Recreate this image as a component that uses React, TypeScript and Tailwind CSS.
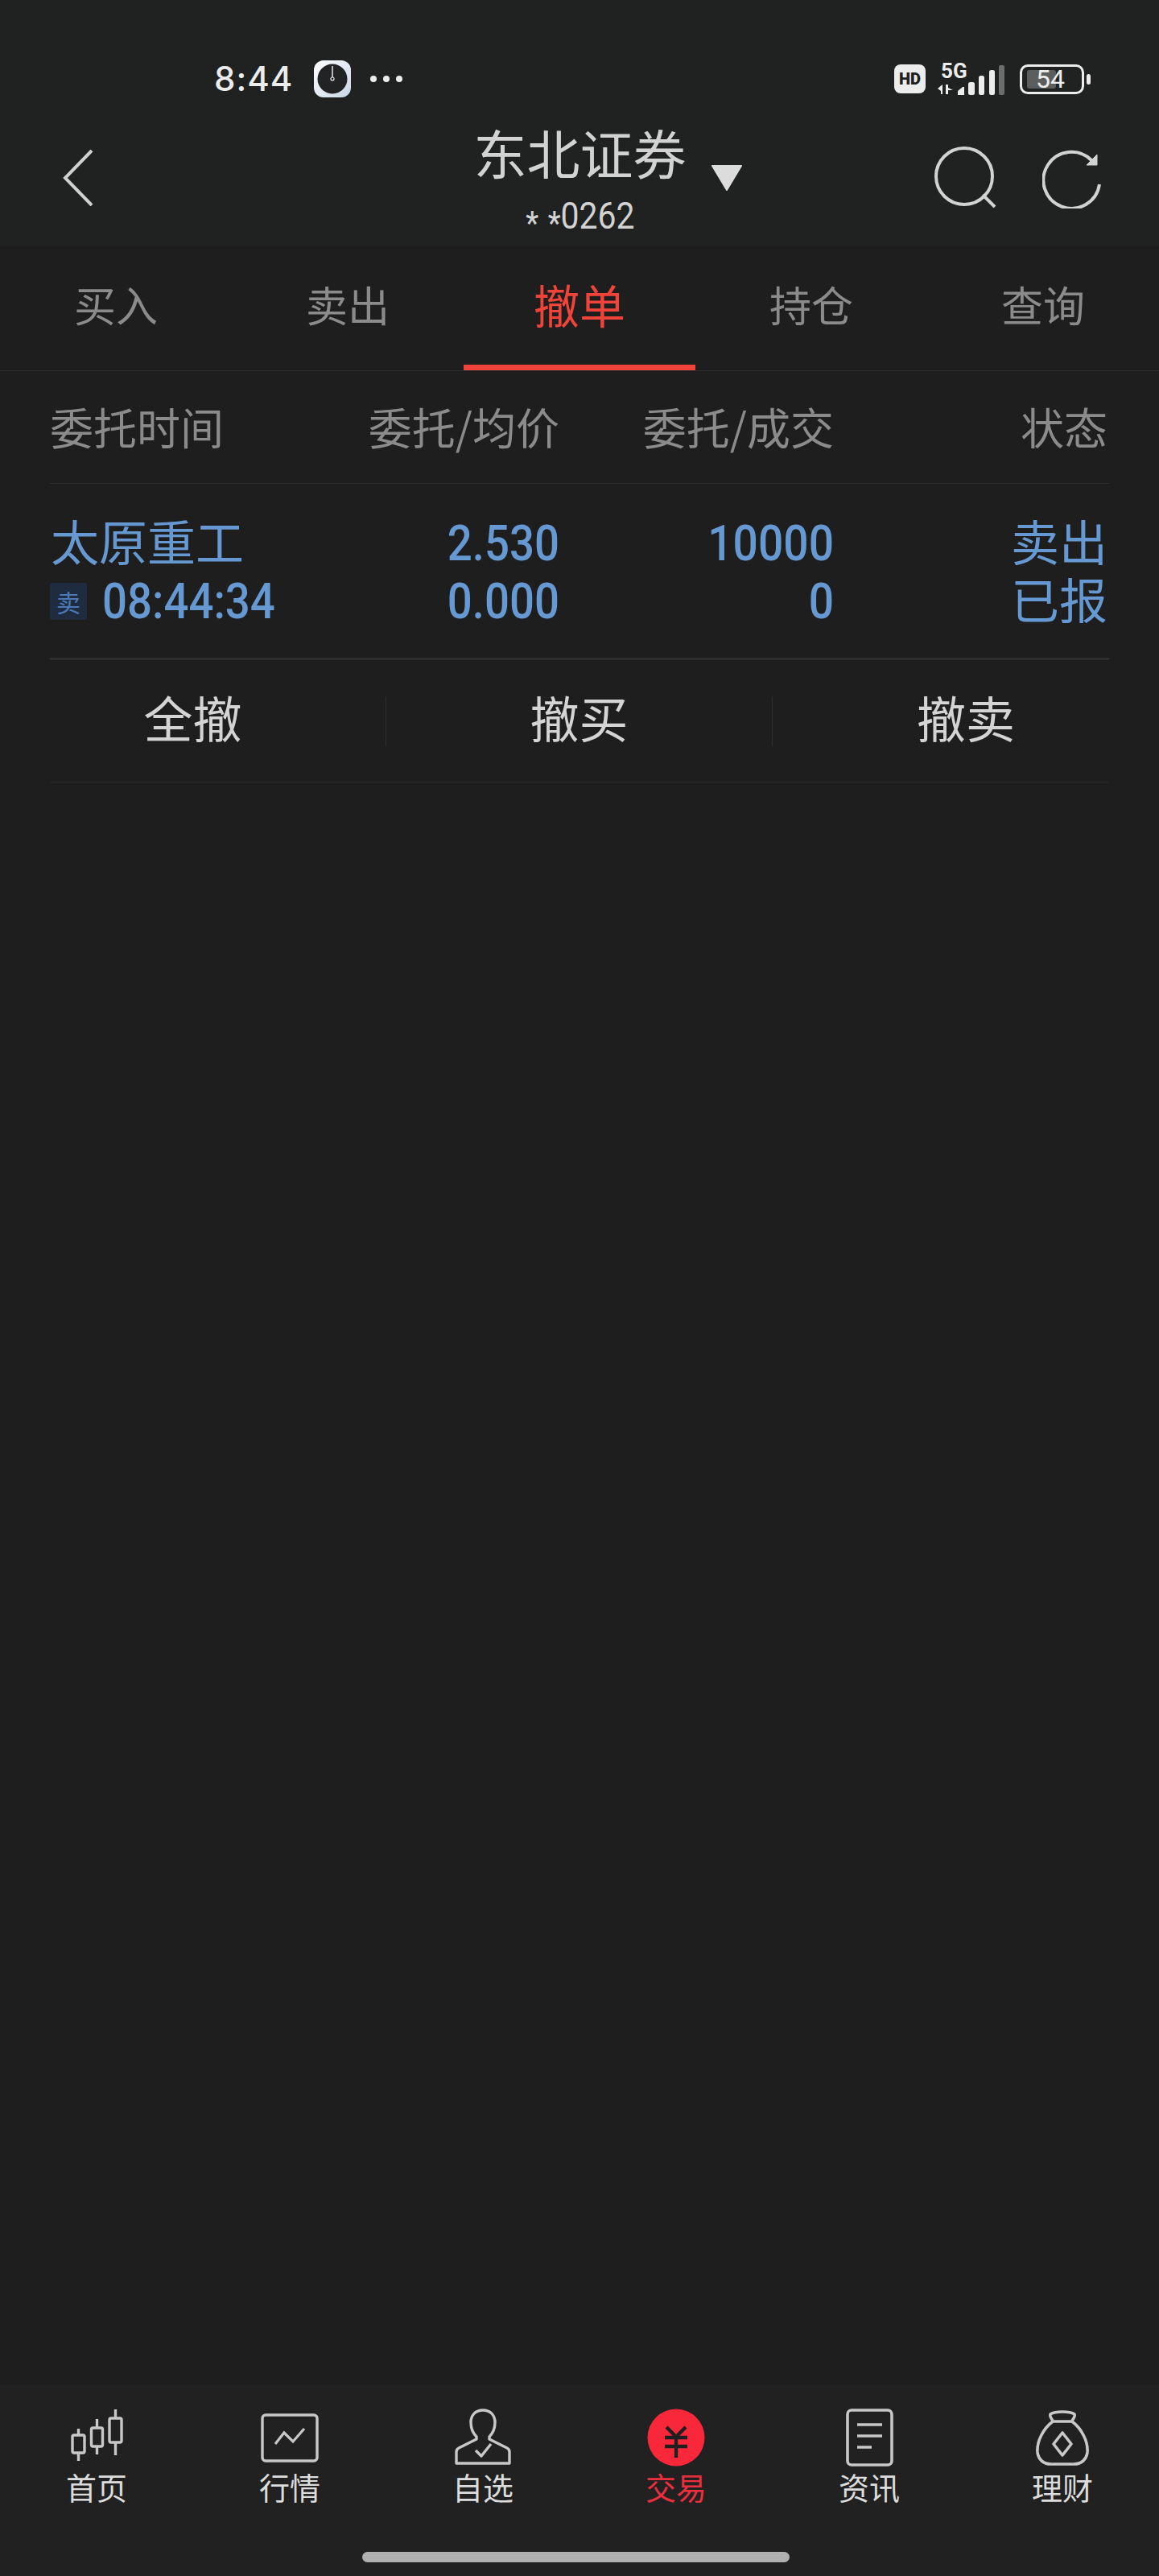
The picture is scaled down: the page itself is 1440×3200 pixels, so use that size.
const cjk = "font-['Noto_Sans_CJK_SC','Noto_Sans',sans-serif]";
const din = "font-['Roboto','Noto_Sans_CJK_SC',sans-serif]";

const tabs = ["买入", "卖出", "撤单", "持仓", "查询"];

function ClockIcon() {
  return (
    <svg width="46" height="46" viewBox="0 0 46 46">
      <defs>
        <linearGradient id="clockBg" x1="0" y1="0" x2="1" y2="1">
          <stop offset="0" stopColor="#ffffff" />
          <stop offset="1" stopColor="#c9d6e6" />
        </linearGradient>
      </defs>
      <rect width="46" height="46" rx="12" fill="url(#clockBg)" />
      <circle cx="23" cy="23" r="18.5" fill="#222325" />
      <line x1="23" y1="7" x2="23" y2="21" stroke="#e8e8e8" strokeWidth="1.5" />
      <circle cx="23" cy="23" r="2" fill="#222325" stroke="#eeeeee" strokeWidth="1.2" />
    </svg>
  );
}

function SignalBars() {
  return (
    <svg width="58" height="37" viewBox="0 0 58 37">
      <path d="M0 37v-5l6-5h2v10z" fill="#ececec" />
      <rect x="13" y="21" width="8" height="16" rx="2.5" fill="#ececec" />
      <rect x="26" y="13" width="7" height="24" rx="2.5" fill="#ececec" />
      <rect x="39" y="6" width="7" height="31" rx="2.5" fill="#ececec" />
      <rect x="51" y="0" width="7" height="37" rx="2" fill="#6b6d6d" />
    </svg>
  );
}

function Arrows() {
  return (
    <svg width="20" height="14" viewBox="0 0 20 14">
      <path d="M0 6l6-5v12H4V9z" fill="#ececec" />
      <path d="M10 1h3v4l6 3h-6v5h-3z" fill="#ececec" />
    </svg>
  );
}

function NavIcon({ name }: { name: string }) {
  const c = "#c8c8c8";
  if (name === "首页") {
    return (
      <svg width="72" height="72" viewBox="0 0 72 72" fill="none" stroke={c} strokeWidth="3.4">
        <rect x="6" y="33" width="15" height="22" rx="2" />
        <line x1="13.5" y1="25" x2="13.5" y2="33" />
        <line x1="13.5" y1="55" x2="13.5" y2="65" />
        <rect x="29.5" y="24" width="14" height="23" rx="2" />
        <line x1="36.5" y1="13" x2="36.5" y2="24" />
        <line x1="36.5" y1="47" x2="36.5" y2="57" />
        <rect x="52" y="12" width="15" height="30" rx="2" />
        <line x1="59.5" y1="1" x2="59.5" y2="12" />
        <line x1="59.5" y1="42" x2="59.5" y2="58" />
      </svg>
    );
  }
  if (name === "行情") {
    return (
      <svg width="72" height="72" viewBox="0 0 72 72" fill="none" stroke={c} strokeWidth="3.4">
        <rect x="2" y="8" width="68" height="57" rx="4" />
        <path d="M18 44l11-14 11 11 14-16" strokeWidth="3.2" />
      </svg>
    );
  }
  if (name === "自选") {
    return (
      <svg width="72" height="72" viewBox="0 0 72 72" fill="none" stroke={c} strokeWidth="3.4" strokeLinejoin="round">
        <path d="M28 35c-5-5-7-11-7-18 0-9 6-15 15-15s15 6 15 15c0 7-2 13-7 18v3l22 11c2 1 3 3 3 5v14H3V54c0-2 1-4 3-5l22-11z" />
        <path d="M27 52l7 7 12-15" strokeWidth="3.4" />
      </svg>
    );
  }
  if (name === "交易") {
    return (
      <svg width="72" height="72" viewBox="0 0 72 72">
        <circle cx="36" cy="36" r="35.5" fill="#f9273a" />
        <path d="M24 23l12 12 12-12M22 36h28M22 47h28M36 35v26" fill="none" stroke="#1f1f1f" strokeWidth="4.4" />
      </svg>
    );
  }
  if (name === "资讯") {
    return (
      <svg width="72" height="72" viewBox="0 0 72 72" fill="none" stroke={c} strokeWidth="3.6">
        <rect x="9" y="2" width="55" height="68" rx="5" />
        <path d="M21 20h31M21 34h31M21 48h18" />
      </svg>
    );
  }
  return (
    <svg width="72" height="72" viewBox="0 0 72 72" fill="none" stroke={c} strokeWidth="3.6" strokeLinejoin="round">
      <path d="M24 15c-3-4-4-6-3-8 6-4 24-4 30 0 1 2 0 4-3 8" />
      <path d="M24 16h24c12 9 20 25 19 38-1 10-8 15-17 15H22c-9 0-16-5-17-15-1-13 7-29 19-38z" />
      <path d="M36 30l11 14-11 14-11-14z" />
    </svg>
  );
}

export default function App() {
  return (
    <div className={`flex h-[3200px] w-[1440px] flex-col bg-[#1e1e1e] ${cjk}`}>
      {/* status bar + title */}
      <div className="h-[305px] bg-[#202221]">
        <div className="flex h-[124px] items-end pl-[266px] pr-[85px]">
          <div className="flex h-[52px] w-full items-center">
            <span className="font-['Inter',sans-serif] text-[42px] leading-none font-medium tracking-[1px] text-[#ececec]">8:44</span>
            <div className="ml-[26px]">
              <ClockIcon />
            </div>
            <div className="ml-[24px] flex gap-[8px]">
              <span className="size-[8px] rounded-full bg-[#ececec]" />
              <span className="size-[8px] rounded-full bg-[#ececec]" />
              <span className="size-[8px] rounded-full bg-[#ececec]" />
            </div>
            <div className="ml-auto flex items-center">
              <div className={`flex h-[36px] w-[39px] items-center justify-center rounded-[8px] bg-[#ececec] text-[20px] font-black text-[#1f2121] ${din}`}>
                HD
              </div>
              <div className="ml-[19px] flex w-[21px] flex-col overflow-visible">
                <span className={`text-[26px] leading-[20px] font-bold whitespace-nowrap text-[#ececec] ${din}`}>5G</span>
                <div className="mt-[6px] ml-[-4px]">
                  <Arrows />
                </div>
              </div>
              <div className="mt-[2px]">
                <SignalBars />
              </div>
              <div className="relative ml-[19px] flex h-[37px] w-[80px] items-center justify-center rounded-[10px] border-[3px] border-[#ececec] pr-[4px]">
                <div className="absolute top-[4px] bottom-[4px] left-[6px] w-[36px] rounded-[3px] bg-[#5c5e5e]" />
                <span className={`relative text-[32px] leading-none text-[#ececec] ${din}`}>54</span>
              </div>
              <div className="ml-[3px] h-[13px] w-[5px] rounded-full bg-[#ececec]" />
            </div>
          </div>
        </div>
        <div className="mt-[20px] flex items-start">
          <div className="ml-[78px] mt-[42px] w-[38px]">
            <svg width="38" height="70" viewBox="0 0 38 70" fill="none" stroke="#d0d0d0" strokeWidth="4">
              <path d="M36 1L3 35l33 34" />
            </svg>
          </div>
          <div className="ml-[474px] flex w-[261px] flex-col items-center">
            <span className="text-[66px] leading-[88px] whitespace-nowrap text-[#d2d2d2]">东北证券</span>
            <span className={`mt-[8px] origin-center scale-x-[0.89] text-[46px] leading-[56px] whitespace-nowrap text-[#d2d2d2] ${din}`}>
              <span className="align-[-7px] text-[40px] font-medium">
                <span className="tracking-[13px]">*</span>*
              </span>
              0262
            </span>
          </div>
          <svg className="mt-[61px] ml-[32px]" width="40" height="32" viewBox="0 0 40 32">
            <path d="M2 1h36L20 31z" fill="#dcdcdc" stroke="#dcdcdc" strokeWidth="2" strokeLinejoin="round" />
          </svg>
          <svg className="ml-[238px] mt-[38px]" width="78" height="78" viewBox="0 0 78 78" fill="none" stroke="#d2d2d2" strokeWidth="4">
            <circle cx="37" cy="37" r="35" />
            <path d="M60 60l15 15" />
          </svg>
          <svg className="ml-[56px] mt-[39px]" width="76" height="76" viewBox="0 0 76 76" fill="none" stroke="#d2d2d2" strokeWidth="4">
            <path d="M71 46a35 35 0 1 1-10-30" />
            <path d="M68 9v13H55z" fill="#d2d2d2" strokeWidth="1" />
          </svg>
        </div>
      </div>

      {/* tabs */}
      <div className="grid h-[156px] grid-cols-5 border-b border-[#2e2e2e]">
        {tabs.map((t) => (
          <div key={t} className={`flex items-center justify-center border-b-[7px] pb-[3px] ${t === "撤单" ? "border-[#f0443a] text-[57px] text-[#f0443a]" : "border-transparent text-[52px] text-[#8b8b8b]"}`}>
            {t}
          </div>
        ))}
      </div>

      {/* entrust table */}
      <div className="mx-[62px] w-[1316px]">
        <div className="grid h-[140px] grid-cols-[300px_333px_341px_340px] items-center border-b border-[#2e2e2e] pb-[3px] text-[54px] text-[#8b8b8b]">
          <span>委托时间</span>
          <span className="text-right">委托/均价</span>
          <span className="text-right">委托/成交</span>
          <span className="text-right">状态</span>
        </div>
        <div className="grid h-[216px] grid-cols-[300px_333px_341px_340px] content-start pt-[38px] text-[#6699d2] leading-[72px]">
          <span className="mt-[-4px] ml-[1px] text-[60px] leading-[72px] whitespace-nowrap">太原重工</span>
          <span className={`origin-right scale-x-[0.88] text-right text-[62px] font-medium ${din}`}>2.530</span>
          <span className={`origin-right scale-x-[0.89] text-right text-[62px] font-medium ${din}`}>10000</span>
          <span className="mt-[-4px] text-right text-[60px]">卖出</span>
          <div className="flex items-center">
            <span className="flex h-[46px] w-[46px] shrink-0 items-center justify-center rounded-[3px] bg-[#1f2c3f] text-[30px] text-[#4a7ab5]">卖</span>
            <span className={`ml-[19px] origin-left scale-x-[0.88] text-[62px] font-medium whitespace-nowrap ${din}`}>08:44:34</span>
          </div>
          <span className={`origin-right scale-x-[0.88] text-right text-[62px] font-medium ${din}`}>0.000</span>
          <span className={`origin-right scale-x-[0.89] text-right text-[62px] font-medium ${din}`}>0</span>
          <span className="mt-[-4px] text-right text-[60px]">已报</span>
        </div>
        <div className="h-[3px] bg-[#2e2e2e]" />
      </div>
      <div className="grid h-[151px] grid-cols-3 items-center text-center text-[61px] text-[#d4d4d4]">
        <div className="flex h-[62px] items-center justify-center border-r border-[#2e2e2e] pb-[10px] leading-none">全撤</div>
        <div className="flex h-[62px] items-center justify-center border-r border-[#2e2e2e] pb-[10px] leading-none">撤买</div>
        <div className="flex h-[62px] items-center justify-center pb-[10px] leading-none">撤卖</div>
      </div>
      <div className="mx-[62px] h-px w-[1316px] bg-[#2a2a2a]" />

      {/* bottom nav */}
      <div className="mt-auto flex h-[237px] flex-col bg-[#212121]">
        <div className="grid grid-cols-6 pt-[29px]">
          {["首页", "行情", "自选", "交易", "资讯", "理财"].map((n) => (
            <div key={n} className="flex flex-col items-center">
              <NavIcon name={n} />
              <span className={`text-[38px] leading-[50px] ${n === "交易" ? "text-[#ec2f3e]" : "text-[#dcdcdc]"}`}>{n}</span>
            </div>
          ))}
        </div>
        <div className="mt-[56px] ml-[450px] h-[13px] w-[531px] rounded-full bg-[#b0b0b0]" />
      </div>
    </div>
  );
}
